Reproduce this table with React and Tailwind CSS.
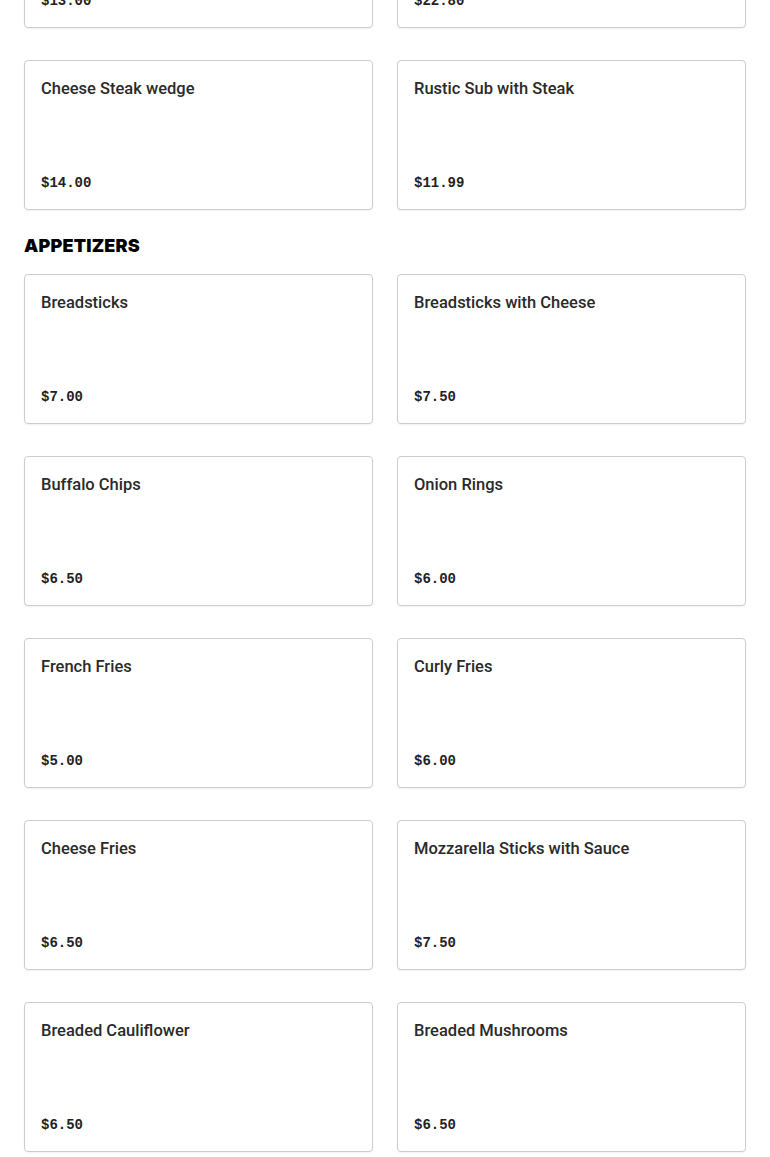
const sections = [
  {
    title: null,
    items: [
      { name: "", price: "$13.00" },
      { name: "", price: "$22.80" },
      { name: "Cheese Steak wedge", price: "$14.00" },
      { name: "Rustic Sub with Steak", price: "$11.99" },
    ],
  },
  {
    title: "APPETIZERS",
    items: [
      { name: "Breadsticks", price: "$7.00" },
      { name: "Breadsticks with Cheese", price: "$7.50" },
      { name: "Buffalo Chips", price: "$6.50" },
      { name: "Onion Rings", price: "$6.00" },
      { name: "French Fries", price: "$5.00" },
      { name: "Curly Fries", price: "$6.00" },
      { name: "Cheese Fries", price: "$6.50" },
      { name: "Mozzarella Sticks with Sauce", price: "$7.50" },
      { name: "Breaded Cauliflower", price: "$6.50" },
      { name: "Breaded Mushrooms", price: "$6.50" },
    ],
  },
];

const ItemCard = ({ name, price }) => (
  <div className="flex h-[150px] flex-col justify-between rounded-[4px] border border-[#cdcdcd] bg-white p-4 shadow-[0_1px_2px_rgba(0,0,0,0.06)]">
    <div className="text-[16.5px] font-medium leading-6 text-[#2a2a2a] [font-family:Roboto,'Noto_Sans',sans-serif]">
      {name}
    </div>
    <div className="text-[14px] font-bold leading-5 text-[#222] [font-family:'Liberation_Mono',monospace]">
      {price}
    </div>
  </div>
);

export default function App() {
  return (
    <div className="min-h-screen overflow-hidden bg-white">
      <div className="-mt-[122px] px-6 pb-10">
        {sections.map((s, i) => (
          <section key={i}>
            {s.title && (
              <h2 className="mb-4 pt-[24px] text-[18px] font-black leading-6 tracking-[0.01em] text-black [font-family:Inter,sans-serif]">
                {s.title}
              </h2>
            )}
            <div className="grid grid-cols-2 gap-x-6 gap-y-8">
              {s.items.map((it, j) => (
                <ItemCard key={j} {...it} />
              ))}
            </div>
          </section>
        ))}
      </div>
    </div>
  );
}
